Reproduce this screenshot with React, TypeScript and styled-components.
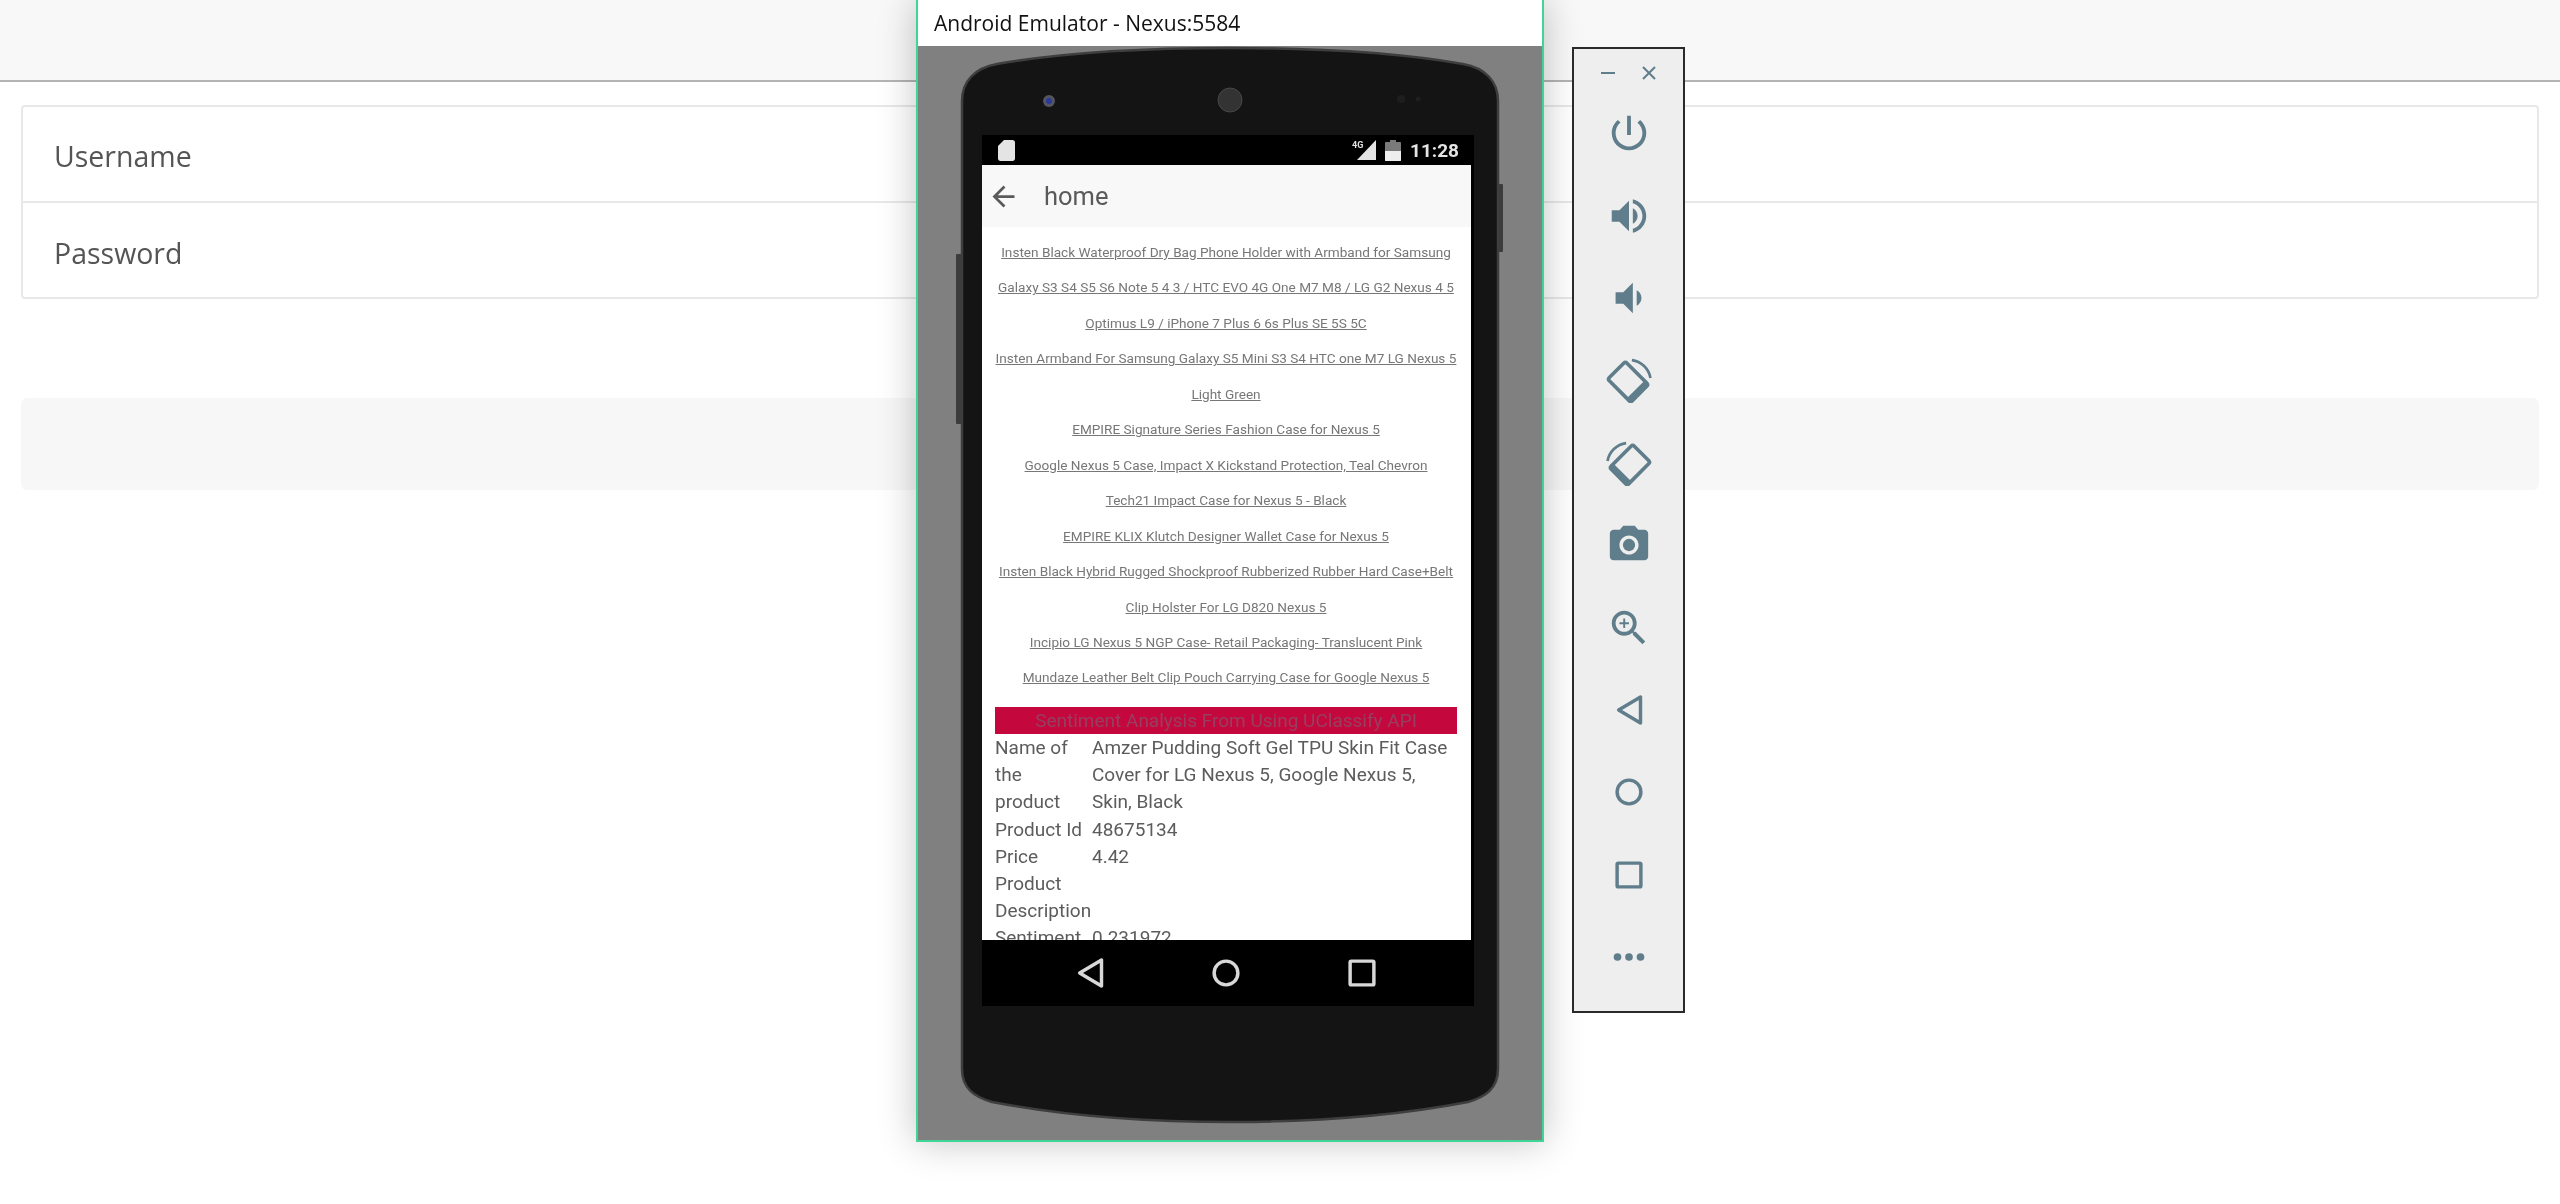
import React from "react";
import styled, { createGlobalStyle } from "styled-components";

const GlobalStyle = createGlobalStyle`
  html, body {
    margin: 0;
    padding: 0;
    background: #ffffff;
    overflow: hidden;
  }
  body {
    font-family: "Open Sans", "Liberation Sans", sans-serif;
  }
`;

const Page = styled.div`
  position: relative;
  width: 2560px;
  height: 1204px;
  overflow: hidden;
`;

const Header = styled.div`
  height: 80px;
  background: #f8f8f8;
  border-bottom: 2px solid #b4b4b4;
`;

const LoginList = styled.div`
  margin: 23px 21px 0 21px;
  border: 2px solid #e8e8e8;
  border-radius: 4px;
`;

const LoginRow = styled.div`
  height: 94px;
  box-sizing: border-box;
  padding: 3px 0 0 31px;
  display: flex;
  align-items: center;
  font-size: 28.5px;
  color: #555555;
  filter: blur(0.4px);
  & + & {
    border-top: 2px solid #e8e8e8;
    height: 96px;
    padding-top: 5px;
  }
`;

const Well = styled.div`
  margin: 99px 21px 0 21px;
  height: 92px;
  background: #f7f7f7;
  border-radius: 6px;
`;

const EmulatorWindow = styled.div`
  position: absolute;
  left: 916px;
  top: 0;
  width: 628px;
  height: 1142px;
  box-sizing: border-box;
  display: flex;
  flex-direction: column;
  border: 2px solid #3ed596;
  border-top: none;
  background: #ffffff;
  box-shadow: 0 0 36px rgba(0, 0, 0, 0.24);
`;

const TitleBar = styled.div`
  height: 46px;
  padding-left: 16px;
  display: flex;
  align-items: center;
  font-size: 21px;
  color: #111111;
  filter: blur(0.35px);
  background: #ffffff;
`;

const EmulatorBody = styled.div`
  position: relative;
  flex: 1;
  background: #808080;
  padding: 89px 0 0 64px;
`;

const PhoneDrawing = styled.svg`
  position: absolute;
  left: 0;
  top: 0;
  filter: blur(0.7px);
`;

const Screen = styled.div`
  position: relative;
  width: 492px;
  height: 871px;
  background: #000000;
  display: flex;
  flex-direction: column;
  filter: blur(0.6px);
`;

const StatusBar = styled.div`
  height: 30px;
  flex-shrink: 0;
  display: flex;
  align-items: center;
  padding: 0 15px 0 16px;
  color: #e4e4e4;
`;

const StatusRight = styled.div`
  margin-left: auto;
  display: flex;
  align-items: center;
  gap: 9px;
`;

const Clock = styled.span`
  font-family: Roboto, sans-serif;
  font-weight: 700;
  font-size: 19px;
`;

const AppArea = styled.div`
  width: 489px;
  flex: 1;
  min-height: 0;
  background: #ffffff;
  display: flex;
  flex-direction: column;
  overflow: hidden;
  font-family: Roboto, sans-serif;
`;

const AppBar = styled.div`
  height: 62px;
  flex-shrink: 0;
  display: flex;
  align-items: center;
  gap: 24px;
  padding-left: 5px;
  background: #f8f8f8;
  color: #5a5a5a;
  font-size: 25.5px;
`;

const Content = styled.div`
  padding: 8px 14px 0 13px;
`;

const ProductLinks = styled.div`
  text-align: center;
  font-size: 13.6px;
  line-height: 35.45px;
  color: #777777;
  filter: blur(0.5px);
  margin-bottom: 11px;
`;

const ProductLink = styled.a`
  display: block;
  color: inherit;
  span {
    text-decoration: underline;
  }
`;

const Banner = styled.div`
  height: 27px;
  line-height: 27px;
  background: #c4083e;
  color: #963f5f;
  font-size: 19px;
  text-align: center;
`;

const DetailGrid = styled.div`
  display: grid;
  grid-template-columns: 97px 1fr;
  font-size: 19px;
  line-height: 27.2px;
  color: #5c5c5c;
`;

const DetailLabel = styled.div`
  white-space: nowrap;
`;

const NavBar = styled.div`
  height: 66px;
  flex-shrink: 0;
  padding-right: 4px;
  display: flex;
  justify-content: center;
  align-items: center;
  color: #d8d8d8;
`;

const NavSlot = styled.div`
  width: 136px;
  display: flex;
  justify-content: center;
`;

const SideToolbar = styled.div`
  position: absolute;
  left: 1572px;
  top: 47px;
  width: 113px;
  height: 966px;
  box-sizing: border-box;
  border: 2px solid #2a2a2a;
  background: #eeeeee;
  color: #607d8b;
  display: flex;
  flex-direction: column;
  align-items: center;
`;

const WindowControls = styled.div`
  display: flex;
  align-items: center;
  gap: 27px;
  height: 20px;
  margin: 14px 0 9px;
  filter: blur(0.4px);
`;

const ToolSlot = styled.div`
  height: 82.4px;
  flex-shrink: 0;
  display: flex;
  align-items: center;
  justify-content: center;
  filter: blur(0.4px);
`;

type IconName =
  | "power"
  | "volumeUp"
  | "volumeDown"
  | "rotateLeft"
  | "rotateRight"
  | "camera"
  | "zoom"
  | "back"
  | "home"
  | "square"
  | "more";

function Icon({ name }: { name: IconName }) {
  return (
    <svg width="46" height="46" viewBox="0 0 24 24" fill="currentColor">
      {name === "power" && (
        <path d="M13 3h-2v10h2V3zm4.83 2.17l-1.42 1.42C17.99 7.86 19 9.81 19 12c0 3.87-3.13 7-7 7s-7-3.13-7-7c0-2.19 1.01-4.14 2.58-5.42L6.17 5.17C4.23 6.82 3 9.26 3 12c0 4.97 4.03 9 9 9s9-4.03 9-9c0-2.74-1.23-5.18-3.17-6.83z" />
      )}
      {name === "volumeUp" && (
        <path d="M3 9v6h4l5 5V4L7 9H3zm13.5 3c0-1.77-1.02-3.29-2.5-4.03v8.05c1.48-.73 2.5-2.25 2.5-4.02zM14 3.23v2.06c2.89.86 5 3.54 5 6.71s-2.11 5.85-5 6.71v2.06c4.01-.91 7-4.49 7-8.77s-2.99-7.86-7-8.77z" />
      )}
      {name === "volumeDown" && (
        <path d="M18.5 12c0-1.77-1.02-3.29-2.5-4.03v8.05c1.48-.73 2.5-2.25 2.5-4.02zM5 9v6h4l5 5V4L9 9H5z" />
      )}
      {(name === "rotateLeft" || name === "rotateRight") && (
        <g transform={name === "rotateRight" ? "translate(24 0) scale(-1 1)" : undefined}>
          <g transform="rotate(-45 11.5 13)">
            <rect x="5" y="4.5" width="13" height="17" rx="1.2" fill="none" stroke="currentColor" strokeWidth="1.9" />
            <rect x="5" y="18.6" width="13" height="2.9" fill="currentColor" />
          </g>
          <path d="M13.5 1.6C18.4 2.2 22.4 6.2 23.2 11" fill="none" stroke="currentColor" strokeWidth="1.4" />
        </g>
      )}
      {name === "camera" && (
        <>
          <path
            fillRule="evenodd"
            d="M9 2L7.17 4H4c-1.1 0-2 .9-2 2v12c0 1.1.9 2 2 2h16c1.1 0 2-.9 2-2V6c0-1.1-.9-2-2-2h-3.17L15 2H9zm3 15c-2.76 0-5-2.24-5-5s2.24-5 5-5 5 2.24 5 5-2.24 5-5 5z"
          />
          <circle cx="12" cy="12" r="3.2" />
        </>
      )}
      {name === "zoom" && (
        <path d="M15.5 14h-.79l-.28-.27C15.41 12.59 16 11.11 16 9.5 16 5.91 13.09 3 9.5 3S3 5.91 3 9.5 5.91 16 9.5 16c1.61 0 3.09-.59 4.23-1.57l.27.28v.79l5 4.99L20.49 19l-4.99-5zm-6 0C7.01 14 5 11.99 5 9.5S7.01 5 9.5 5 14 7.01 14 9.5 11.99 14 9.5 14zm2.5-4h-2v2H9v-2H7V9h2V7h1v2h2v1z" />
      )}
      {name === "back" && (
        <path d="M18 5.2V18.8L6.6 12Z" fill="none" stroke="currentColor" strokeWidth="1.8" strokeLinejoin="round" />
      )}
      {name === "home" && <circle cx="12" cy="12" r="6.2" fill="none" stroke="currentColor" strokeWidth="1.8" />}
      {name === "square" && (
        <rect x="5.8" y="5.8" width="12.4" height="12.4" rx="0.6" fill="none" stroke="currentColor" strokeWidth="1.8" />
      )}
      {name === "more" && (
        <>
          <circle cx="6" cy="12" r="2" />
          <circle cx="12" cy="12" r="2" />
          <circle cx="18" cy="12" r="2" />
        </>
      )}
    </svg>
  );
}

const toolIcons: IconName[] = [
  "power",
  "volumeUp",
  "volumeDown",
  "rotateLeft",
  "rotateRight",
  "camera",
  "zoom",
  "back",
  "home",
  "square",
  "more",
];

const productLinks = [
  "Insten Black Waterproof Dry Bag Phone Holder with Armband for Samsung Galaxy S3 S4 S5 S6 Note 5 4 3 / HTC EVO 4G One M7 M8 / LG G2 Nexus 4 5 Optimus L9 / iPhone 7 Plus 6 6s Plus SE 5S 5C",
  "Insten Armband For Samsung Galaxy S5 Mini S3 S4 HTC one M7 LG Nexus 5 Light Green",
  "EMPIRE Signature Series Fashion Case for Nexus 5",
  "Google Nexus 5 Case, Impact X Kickstand Protection, Teal Chevron",
  "Tech21 Impact Case for Nexus 5 - Black",
  "EMPIRE KLIX Klutch Designer Wallet Case for Nexus 5",
  "Insten Black Hybrid Rugged Shockproof Rubberized Rubber Hard Case+Belt Clip Holster For LG D820 Nexus 5",
  "Incipio LG Nexus 5 NGP Case- Retail Packaging- Translucent Pink",
  "Mundaze Leather Belt Clip Pouch Carrying Case for Google Nexus 5",
];

const details: { label: string[]; value: string }[] = [
  {
    label: ["Name of", "the", "product"],
    value: "Amzer Pudding Soft Gel TPU Skin Fit Case Cover for LG Nexus 5, Google Nexus 5, Skin, Black",
  },
  { label: ["Product Id"], value: "48675134" },
  { label: ["Price"], value: "4.42" },
  { label: ["Product", "Description"], value: "" },
  { label: ["Sentiment"], value: "0.231972" },
];

function PhoneBody() {
  const outline =
    "M962 102C962 82 975 69 997 65C1060 54 1140 49 1230 49C1320 49 1400 54 1463 65C1485 69 1498 82 1498 102L1498 1070C1498 1090 1485 1098 1468 1103C1400 1116 1320 1123 1230 1123C1140 1123 1060 1116 992 1103C975 1098 962 1090 962 1070Z";
  return (
    <PhoneDrawing width="624" height="1093" viewBox="918 47 624 1093">
      <rect x="956" y="255" width="7" height="170" rx="1" fill="#3c3c3c" />
      <rect x="1497" y="185" width="6" height="68" rx="1" fill="#3c3c3c" />
      <path d={outline} fill="#141414" stroke="#3e3e3e" strokeWidth="2.5" />
      <circle cx="1049" cy="102" r="6" fill="#55555f" />
      <circle cx="1049" cy="102" r="3" fill="#2b3a9a" />
      <circle cx="1230" cy="101" r="12" fill="#333333" stroke="#484848" />
      <circle cx="1401" cy="100" r="4" fill="#1e1e1e" />
      <circle cx="1418" cy="100" r="2.5" fill="#1e1e1e" />
    </PhoneDrawing>
  );
}

function SdCardIcon() {
  return (
    <svg width="17" height="21" viewBox="0 0 17 21" fill="currentColor">
      <path d="M6 0H14.5C15.9 0 17 1.1 17 2.5V18.5C17 19.9 15.9 21 14.5 21H2.5C1.1 21 0 19.9 0 18.5V6Z" />
    </svg>
  );
}

function SignalIcon() {
  return (
    <svg width="24" height="20" viewBox="0 0 24 20" fill="currentColor">
      <path d="M24 0V20H5Z" />
      <text x="0" y="8" fontFamily="Roboto, sans-serif" fontWeight="700" fontSize="9">
        4G
      </text>
    </svg>
  );
}

function BatteryIcon() {
  return (
    <svg width="16" height="21" viewBox="0 0 16 21">
      <path d="M5 0H11V2H15C15.6 2 16 2.4 16 3V20C16 20.6 15.6 21 15 21H1C.4 21 0 20.6 0 20V3C0 2.4.4 2 1 2H5Z" fill="#7a7a7a" />
      <path d="M0 11H16V20C16 20.6 15.6 21 15 21H1C.4 21 0 20.6 0 20Z" fill="#eeeeee" />
    </svg>
  );
}

export default function App() {
  return (
    <Page>
      <GlobalStyle />
      <Header />
      <LoginList>
        <LoginRow>Username</LoginRow>
        <LoginRow>Password</LoginRow>
      </LoginList>
      <Well />

      <EmulatorWindow>
        <TitleBar>Android Emulator - Nexus:5584</TitleBar>
        <EmulatorBody>
          <PhoneBody />
          <Screen>
            <StatusBar>
              <SdCardIcon />
              <StatusRight>
                <SignalIcon />
                <BatteryIcon />
                <Clock>11:28</Clock>
              </StatusRight>
            </StatusBar>
            <AppArea>
              <AppBar>
                <svg width="33" height="33" viewBox="0 0 24 24" fill="currentColor">
                  <path d="M20 11H7.83l5.59-5.59L12 4l-8 8 8 8 1.41-1.41L7.83 13H20v-2z" />
                </svg>
                <span>home</span>
              </AppBar>
              <Content>
                <ProductLinks>
                  {productLinks.map((link) => (
                    <ProductLink key={link}>
                      <span>{link}</span>
                    </ProductLink>
                  ))}
                </ProductLinks>
                <Banner>Sentiment Analysis From Using UClassify API</Banner>
                <DetailGrid>
                  {details.map(({ label, value }) => (
                    <React.Fragment key={label.join(" ")}>
                      <DetailLabel>
                        {label.map((line) => (
                          <div key={line}>{line}</div>
                        ))}
                      </DetailLabel>
                      <div>{value}</div>
                    </React.Fragment>
                  ))}
                </DetailGrid>
              </Content>
            </AppArea>
            <NavBar>
              <NavSlot>
                <Icon name="back" />
              </NavSlot>
              <NavSlot>
                <Icon name="home" />
              </NavSlot>
              <NavSlot>
                <Icon name="square" />
              </NavSlot>
            </NavBar>
          </Screen>
        </EmulatorBody>
      </EmulatorWindow>

      <SideToolbar>
        <WindowControls>
          <svg width="14" height="14" viewBox="0 0 14 14" stroke="currentColor" strokeWidth="2">
            <path d="M0 7H14" />
          </svg>
          <svg width="14" height="14" viewBox="0 0 14 14" stroke="currentColor" strokeWidth="2">
            <path d="M1 1L13 13M13 1L1 13" />
          </svg>
        </WindowControls>
        {toolIcons.map((name) => (
          <ToolSlot key={name}>
            <Icon name={name} />
          </ToolSlot>
        ))}
      </SideToolbar>
    </Page>
  );
}
